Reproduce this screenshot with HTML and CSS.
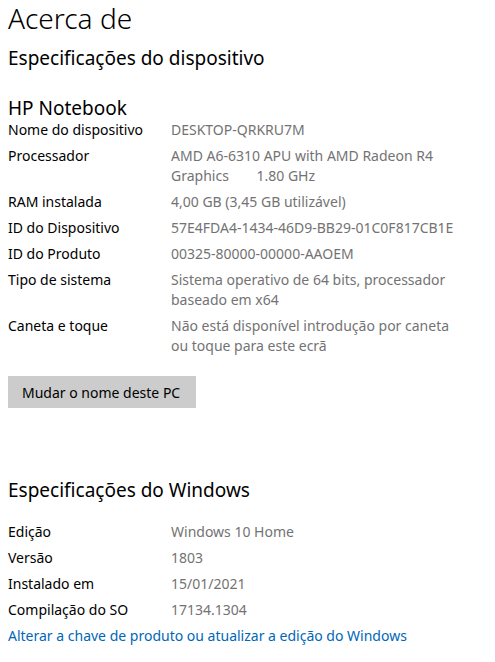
FILE: index.html
```html
<!DOCTYPE html>
<html>
<head>
    <title>Acerca de</title>
    <link rel="stylesheet" href="styles.css">
</head>
<body>
    <h1 class="page-title">Acerca de</h1>

    <section class="section">
        <h2 class="section-title">Especificações do dispositivo</h2>
        <h3 class="device-name">HP Notebook</h3>
        <div class="specs">
            <div class="label">Nome do dispositivo</div>
            <div class="value">DESKTOP-QRKRU7M</div>

            <div class="label">Processador</div>
            <div class="value">AMD A6-6310 APU with AMD Radeon R4<br>Graphics <span class="freq">1.80 GHz</span></div>

            <div class="label">RAM instalada</div>
            <div class="value">4,00 GB (3,45 GB utilizável)</div>

            <div class="label">ID do Dispositivo</div>
            <div class="value">57E4FDA4-1434-46D9-BB29-01C0F817CB1E</div>

            <div class="label">ID do Produto</div>
            <div class="value">00325-80000-00000-AAOEM</div>

            <div class="label">Tipo de sistema</div>
            <div class="value">Sistema operativo de 64 bits, processador<br>baseado em x64</div>

            <div class="label">Caneta e toque</div>
            <div class="value">Não está disponível introdução por caneta<br>ou toque para este ecrã</div>
        </div>
        <button class="rename-btn" type="button">Mudar o nome deste PC</button>
    </section>

    <section class="section windows">
        <h2 class="section-title">Especificações do Windows</h2>
        <div class="specs">
            <div class="label">Edição</div>
            <div class="value">Windows 10 Home</div>

            <div class="label">Versão</div>
            <div class="value">1803</div>

            <div class="label">Instalado em</div>
            <div class="value">15/01/2021</div>

            <div class="label">Compilação do SO</div>
            <div class="value">17134.1304</div>
        </div>
        <a class="product-link" href="#">Alterar a chave de produto ou atualizar a edição do Windows</a>
    </section>
</body>
</html>
```

FILE: styles.css
```css
body {
    margin: 0;
    padding: 0 8px;
    background: #fff;
    color: #000;
    font-family: "Segoe UI", "Noto Sans", Arial, sans-serif;
    font-size: 14px;
}

.page-title {
    margin: 0;
    font-size: 28px;
    font-weight: 300;
    line-height: 36px;
}

.section-title {
    margin: 8px 0 0;
    font-size: 19px;
    font-weight: 400;
    line-height: 28px;
}

.device-name {
    margin: 24px 0 0;
    font-size: 19px;
    font-weight: 400;
    line-height: 24px;
}

/* two column list of specs */
.specs {
    display: grid;
    grid-template-columns: 163px 1fr;
    row-gap: 6px;
    line-height: 20px;
}

.value {
    color: #737373;
}

.freq {
    margin-left: 24px;
}

.rename-btn {
    margin-top: 20px;
    padding: 0 16px 0 14px;
    height: 32px;
    border: none;
    background-color: #cccccc;
    color: #000;
    font-family: inherit;
    font-size: 14px;
}

.windows {
    margin-top: 68px;
}

.windows .specs {
    margin-top: 18px;
}

.product-link {
    display: block;
    margin-top: 6px;
    line-height: 20px;
    color: #0067b8;
    text-decoration: none;
}
```
